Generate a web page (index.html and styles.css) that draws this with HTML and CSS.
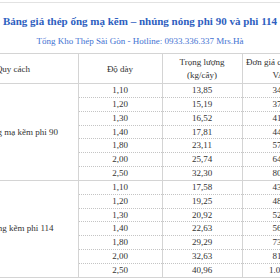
FILE: index.html
```html
<!DOCTYPE html>
<html lang="vi">
<head>
<meta charset="utf-8">
<link rel="stylesheet" href="styles.css">
</head>
<body>
<div class="page">
  <h1 class="title">Bảng giá thép ống mạ kẽm – nhúng nóng phi 90 và phi 114</h1>
  <p class="subtitle">Tổng Kho Thép Sài Gòn - Hotline: 0933.336.337 Mrs.Hà</p>
  <div class="table-wrap">
    <table class="price">
      <colgroup>
        <col class="c1"><col class="c2"><col class="c3"><col class="c4">
      </colgroup>
      <thead>
        <tr>
          <th>Quy cách</th>
          <th>Độ dày</th>
          <th>Trọng lượng<br>(kg/cây)</th>
          <th>Đơn giá chưa bao gồm<br>VAT (đ)</th>
        </tr>
      </thead>
      <tbody>
        <tr><td class="group" rowspan="7">Thép ống mạ kẽm phi 90</td><td>1,10</td><td>13,85</td><td>346.250</td></tr>
        <tr><td>1,20</td><td>15,19</td><td>379.750</td></tr>
        <tr><td>1,30</td><td>16,52</td><td>413.000</td></tr>
        <tr><td>1,40</td><td>17,81</td><td>445.250</td></tr>
        <tr><td>1,80</td><td>23,11</td><td>577.750</td></tr>
        <tr><td>2,00</td><td>25,74</td><td>643.500</td></tr>
        <tr class="last"><td>2,50</td><td>32,30</td><td>807.500</td></tr>
        <tr><td class="group" rowspan="7">Thép ống kẽm phi 114</td><td>1,10</td><td>17,58</td><td>439.500</td></tr>
        <tr><td>1,20</td><td>19,25</td><td>481.250</td></tr>
        <tr><td>1,30</td><td>20,92</td><td>523.000</td></tr>
        <tr><td>1,40</td><td>22,63</td><td>565.750</td></tr>
        <tr><td>1,80</td><td>29,29</td><td>732.250</td></tr>
        <tr><td>2,00</td><td>32,63</td><td>815.750</td></tr>
        <tr class="last"><td>2,50</td><td>40,96</td><td>1.024.000</td></tr>
      </tbody>
    </table>
  </div>
</div>
</body>
</html>
```

FILE: styles.css
```css
html, body {
  margin: 0;
  padding: 0;
  background: #ffffff;
  overflow: hidden;
}

body {
  font-family: "Liberation Serif", "Times New Roman", serif;
  color: #333333;
}

.page {
  width: 280px;
  margin-top: 2px;
  border-top: 1px solid #e2e2e2;
  display: flex;
  flex-direction: column;
  align-items: center;
}

.title {
  margin: 11px 0 0 0;
  font-size: 11px;
  line-height: 14px;
  font-weight: bold;
  color: #2e60c0;
  white-space: nowrap;
}

.subtitle {
  margin: 8px 0 0 0;
  font-size: 9px;
  line-height: 11px;
  color: #3f72d2;
  white-space: nowrap;
}

.table-wrap {
  margin-top: 6px;
  width: 280px;
  display: flex;
  justify-content: center;
}

.price {
  flex: none;
  table-layout: fixed;
  width: 384px;
  border-collapse: collapse;
  font-size: 9px;
  color: #333333;
}

.c1 { width: 130px; }
.c2 { width: 84px; }
.c3 { width: 80px; }
.c4 { width: 90px; }

.price th {
  font-weight: normal;
  height: 28px;
  padding: 1px 2px 0 2px;
  line-height: 13px;
  text-align: center;
  vertical-align: middle;
  border: 1px solid #d4d4d4;
}

.price td {
  padding: 1px 2px;
  line-height: 10.85px;
  text-align: center;
  vertical-align: middle;
  border-left: 1px solid #d4d4d4;
  border-right: 1px solid #d4d4d4;
  border-bottom: 1px dotted #c4c4c4;
}

.price td.group {
  border-bottom: 1px solid #d4d4d4;
}

.price tr.last td {
  border-bottom: 1px solid #d4d4d4;
}
```
